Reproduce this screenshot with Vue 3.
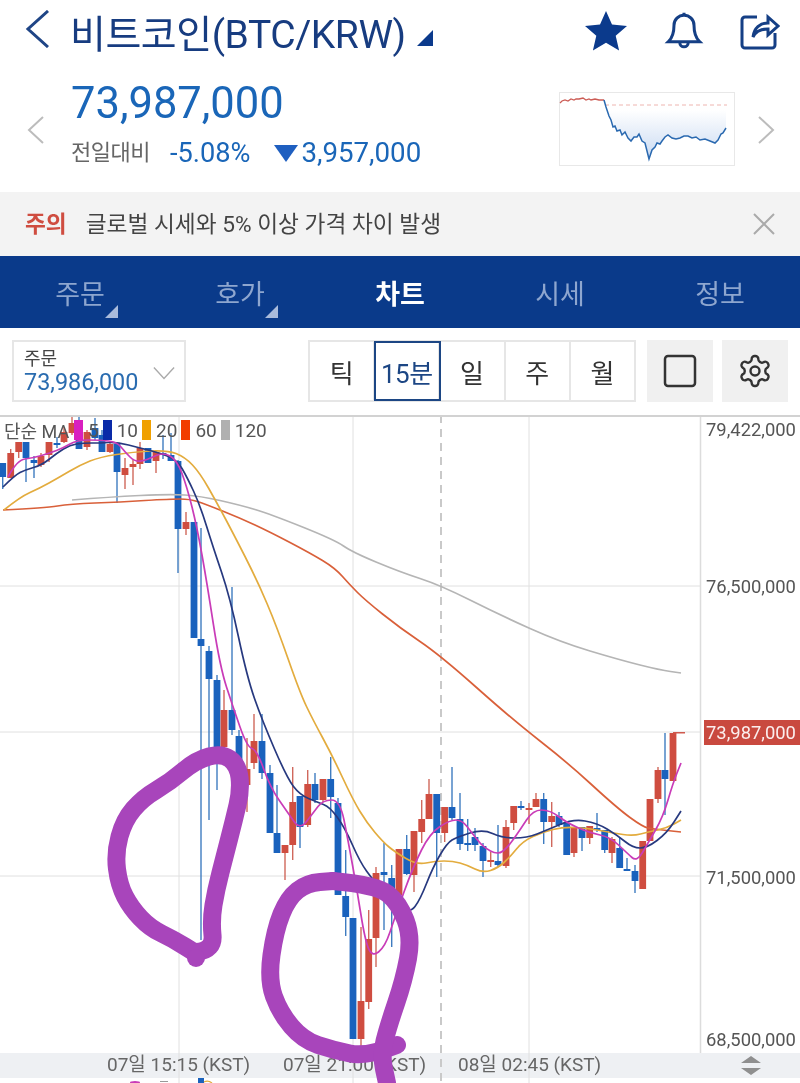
<template>
  <div class="page">
    <header class="title-row">
      <svg class="back" width="24" height="38" viewBox="0 0 24 38"><path d="M23 1 3 19l20 18" /></svg>
      <h1 class="title">비트코인(BTC/KRW)</h1>
      <span class="title-corner"></span>
      <div class="title-icons">
        <svg width="44" height="42" viewBox="0 0 44 42"><path class="star" d="M22 1l6 13.6 15 1.4-11.300 9.800 3.400 14.700L22 32.800 8.900 40.500l3.400-14.700L1 16l15-1.400z" /></svg>
        <svg width="40" height="42" viewBox="0 0 24 25"><g class="line-icon"><path d="M6 9a6 6 0 0 1 12 0c0 7 2.500 9 3.500 10h-19C3.500 18 6 16 6 9" /><path d="M9.500 19.500a2.500 2.500 0 0 0 5 0M12 3V1.500" /></g></svg>
        <svg width="40" height="38" viewBox="0 0 40 38"><g class="line-icon share"><path d="M17 5H5a3 3 0 0 0-3 3v25a3 3 0 0 0 3 3h27a3 3 0 0 0 3-3V21" /><path d="M13 25c1-9 7-14 15-14V5l10 9-10 9v-6c-7 0-12 2-15 8z" /></g></svg>
      </div>
    </header>

    <section class="quote">
      <svg class="pager" width="18" height="28" viewBox="0 0 18 28"><path d="M16 1 2 14l14 13" /></svg>
      <div class="quote-info">
        <div class="price">73,987,000</div>
        <div class="change">
          <span class="change-label">전일대비</span>
          <span class="change-rate">-5.08%</span>
          <span class="down"></span>
          <span class="change-value">3,957,000</span>
        </div>
      </div>
      <svg class="spark" width="176" height="74" viewBox="560 92 176 74">
        <defs>
          <linearGradient id="sparkFill" x1="0" y1="0" x2="0" y2="1">
            <stop offset="0" stop-color="#ffffff" />
            <stop offset="1" stop-color="#c9daf2" />
          </linearGradient>
        </defs>
        <rect x="560.500" y="92.500" width="175" height="73" fill="#fff" stroke="#e8e8e8" />
        <path :d="sparkArea" fill="url(#sparkFill)" />
        <line x1="606" y1="105" x2="728" y2="105" stroke="#eeb5b0" stroke-dasharray="4 3" />
        <polyline :points="sparkUp" fill="none" stroke="#cc5c55" stroke-width="1.300" />
        <polyline :points="sparkDown" fill="none" stroke="#2a69b0" stroke-width="1.500" />
      </svg>
      <svg class="pager" width="18" height="28" viewBox="0 0 18 28"><path d="M2 1l14 13L2 27" /></svg>
    </section>

    <div class="notice">
      <strong>주의</strong>
      <span>글로벌 시세와 5% 이상 가격 차이 발생</span>
      <svg width="24" height="24" viewBox="0 0 24 24"><path d="M2 2l20 20M22 2 2 22" /></svg>
    </div>

    <nav class="tabs">
      <div v-for="tab in tabs" :key="tab.label" class="tab" :class="{ active: tab.active }">
        {{ tab.label }}
        <span v-if="tab.corner" class="tab-corner"></span>
      </div>
    </nav>

    <div class="tools">
      <div class="order-box">
        <div>
          <div class="order-label">주문</div>
          <div class="order-price">73,986,000</div>
        </div>
        <svg width="22" height="14" viewBox="0 0 24 14"><path d="M1 1l11 12L23 1" /></svg>
      </div>
      <div class="periods">
        <div v-for="p in periods" :key="p" class="period" :class="{ selected: p === '15분' }">{{ p }}</div>
      </div>
      <div class="tool-btn first">
        <svg width="34" height="34" viewBox="0 0 34 34"><rect x="2" y="2" width="30" height="30" rx="3" /></svg>
      </div>
      <div class="tool-btn">
        <svg width="36" height="36" viewBox="0 0 24 24">
          <path d="M12.220 2h-.440a2 2 0 0 0-2 2v.180a2 2 0 0 1-1 1.730l-.430.250a2 2 0 0 1-2 0l-.150-.080a2 2 0 0 0-2.730.730l-.220.380a2 2 0 0 0 .730 2.730l.150.100a2 2 0 0 1 1 1.720v.510a2 2 0 0 1-1 1.740l-.150.090a2 2 0 0 0-.730 2.730l.220.380a2 2 0 0 0 2.730.730l.150-.080a2 2 0 0 1 2 0l.430.250a2 2 0 0 1 1 1.730V20a2 2 0 0 0 2 2h.440a2 2 0 0 0 2-2v-.180a2 2 0 0 1 1-1.730l.430-.250a2 2 0 0 1 2 0l.150.080a2 2 0 0 0 2.730-.730l.220-.390a2 2 0 0 0-.730-2.730l-.150-.080a2 2 0 0 1-1-1.740v-.500a2 2 0 0 1 1-1.740l.150-.090a2 2 0 0 0 .730-2.730l-.220-.380a2 2 0 0 0-2.730-.730l-.150.080a2 2 0 0 1-2 0l-.430-.250a2 2 0 0 1-1-1.730V4a2 2 0 0 0-2-2z" />
          <circle cx="12" cy="12" r="3" />
        </svg>
      </div>
    </div>

    <div class="chart">
      <svg class="chart-svg" width="800" height="668" viewBox="0 415 800 668">
        <rect x="0" y="1053" width="800" height="25" fill="#eef0f3" />
        <line v-for="y in [586, 732, 876]" :key="y" x1="0" x2="700" :y1="y" :y2="y" class="grid" />
        <line v-for="x in [179, 353, 529]" :key="x" :x1="x" :x2="x" y1="415" y2="1083" class="grid" />
        <line x1="441" x2="441" y1="415" y2="1083" class="now" />
        <line x1="700.500" x2="700.500" y1="415" y2="1053" class="axis" />

        <g v-for="c in candles" :key="c[0]">
          <rect :x="c[0] - 0.700" :y="c[4]" width="1.400" :height="c[5] - c[4]" :fill="wick(c[1])" />
          <rect :x="c[0] - 3.400" :y="c[2]" width="6.800" :height="Math.max(c[3] - c[2], 2)" :fill="body(c[1])" />
        </g>

        <path :d="smooth(ma120)" class="ma" stroke="#b5b5b5" />
        <path :d="smooth(ma60)" class="ma" stroke="#d9603a" />
        <path :d="smooth(ma20)" class="ma" stroke="#e3ac3e" />
        <path :d="smooth(ma10)" class="ma" stroke="#27397f" />
        <path :d="smooth(ma5)" class="ma" stroke="#c93cb8" />

        <rect x="704" y="720" width="96" height="25" fill="#c9493f" />
        <rect x="673" y="732" width="12" height="1.500" fill="#cf5a4e" />
        <text v-for="l in priceLabels" :key="l.y" x="706" :y="l.y" class="price-label" :fill="l.color">{{ l.text }}</text>
        <text v-for="t in timeLabels" :key="t.x" :x="t.x" y="1071" class="time-label">{{ t.text }}</text>
        <path d="M751 1056l10 7h-20zM741 1068h20l-10 7z" fill="#8f8f8f" />

        <ellipse cx="135" cy="1082.500" rx="5" ry="1.500" fill="#c93cb8" />
        <rect x="160" y="1081" width="8" height="1" fill="#999" />
        <rect x="198" y="1078" width="6" height="5" fill="#1a62bd" />
        <path d="M204 1082q4-2 8 1" fill="none" stroke="#e3ac3e" stroke-width="1.300" />

        <path :d="smooth(loop1)" class="pen" />
        <circle cx="196" cy="958" r="9" fill="#a845bb" />
        <path :d="smooth(loop2a)" class="pen" />
        <path :d="smooth(loop2b)" class="pen" />
      </svg>

      <div class="legend">
        <span class="legend-name">단순 MA</span>
        <template v-for="m in legend" :key="m.label">
          <i :style="{ background: m.color }"></i>
          <span>{{ m.label }}</span>
        </template>
      </div>
    </div>
  </div>
</template>

<script setup>
const tabs = [
  { label: '주문', corner: true },
  { label: '호가', corner: true },
  { label: '차트', active: true },
  { label: '시세' },
  { label: '정보' }
]
const periods = ['틱', '15분', '일', '주', '월']
const legend = [
  { label: '5', color: '#d91fc0' },
  { label: '10', color: '#0a2aa8' },
  { label: '20', color: '#f0a000' },
  { label: '60', color: '#f23c00' },
  { label: '120', color: '#b0b0b0' }
]
const priceLabels = [
  { y: 436, text: '79,422,000', color: '#555' },
  { y: 593, text: '76,500,000', color: '#555' },
  { y: 739, text: '73,987,000', color: '#fbeeee' },
  { y: 884, text: '71,500,000', color: '#555' },
  { y: 1046, text: '68,500,000', color: '#555' }
]
const timeLabels = [
  { x: 107, text: '07일 15:15 (KST)' },
  { x: 283, text: '07일 21:00 (KST)' },
  { x: 458, text: '08일 02:45 (KST)' }
]

const up = [[561, 103], [563, 101], [566, 100], [569, 101], [572, 99], [575, 100], [577, 99], [580, 99], [584, 98], [587, 100], [590, 99], [592, 100], [596, 99], [600, 100], [605, 100]]
const down = [[605, 100], [607, 107], [610, 116], [612, 120], [614, 127], [616, 126], [618, 131], [621, 130], [623, 135], [626, 132], [629, 138], [632, 141], [635, 137], [638, 137], [640, 134], [643, 141], [646, 143], [650, 159], [653, 150], [656, 147], [658, 143], [661, 144], [663, 141], [666, 137], [669, 135], [673, 138], [677, 139], [681, 138], [685, 136], [689, 136], [693, 138], [697, 137], [701, 140], [706, 139], [711, 141], [716, 143], [719, 140], [722, 134], [724, 133], [727, 128]]
const sparkUp = up.join(' ')
const sparkDown = down.join(' ')
const sparkArea = 'M609 110 ' + down.slice(3).map(p => 'L' + p).join(' ') + ' L727 110 Z'

// x, r(ed)/b(lue), body top, body bottom, wick top, wick bottom
const candles = [
  [2.7, 'b', 463, 477, 463, 489], [10.7, 'r', 453, 478, 449, 478], [18.7, 'r', 442, 452, 442, 458],
  [26, 'b', 442, 458, 442, 482], [34, 'b', 460, 463, 456, 478], [41, 'r', 456, 465, 453, 467],
  [49, 'r', 442, 455, 442, 462], [57, 'b', 443, 445, 437, 448], [64, 'r', 432, 442, 427, 443],
  [72, 'r', 423, 433, 415, 435], [79, 'b', 423, 449, 417, 449], [87, 'r', 432, 447, 430, 450],
  [95, 'b', 428, 438, 418, 440], [102, 'b', 435, 452, 430, 452], [110, 'r', 444, 452, 442, 453],
  [117, 'b', 444, 472, 443, 503], [125, 'r', 468, 475, 458, 489], [133, 'r', 464, 467, 460, 485],
  [140, 'r', 448, 464, 442, 469], [148, 'b', 448, 463, 448, 463], [156, 'r', 452, 461, 450, 473],
  [163, 'b', 453, 455, 435, 459], [171, 'b', 455, 461, 433, 461], [178, 'b', 461, 529, 460, 573],
  [186, 'r', 522, 529, 512, 535], [194, 'b', 522, 638, 522, 638], [201, 'b', 639, 646, 528, 940],
  [209, 'b', 651, 679, 646, 820], [217, 'b', 680, 747, 675, 790], [224, 'r', 710, 747, 690, 750],
  [232, 'b', 710, 730, 587, 735], [239, 'b', 736, 760, 730, 765], [247, 'r', 769, 785, 738, 812],
  [254, 'r', 741, 763, 714, 769], [262, 'b', 741, 773, 714, 779], [270, 'b', 773, 833, 765, 833],
  [277, 'b', 833, 853, 785, 853], [285, 'r', 845, 853, 845, 880], [292.7, 'r', 802, 845, 767, 860],
  [300, 'b', 796, 827, 796, 848], [307.7, 'r', 784, 825, 770, 827], [315, 'b', 784, 800, 773, 803],
  [323, 'r', 779, 800, 779, 802], [330.7, 'b', 779, 797, 757, 818], [338, 'b', 803, 895, 798, 895],
  [345.7, 'b', 896, 917, 850, 936], [353, 'b', 918, 1039, 918, 1039], [361, 'r', 1001, 1039, 927, 1048],
  [368.7, 'r', 939, 1002, 910, 1009], [376, 'r', 873, 938, 867, 967], [384, 'b', 872, 875, 843, 930],
  [391.7, 'b', 878, 897, 865, 947], [399, 'r', 849, 895, 849, 895], [406.7, 'b', 849, 874, 835, 875],
  [414, 'r', 831, 875, 831, 892], [421.7, 'r', 819, 832, 800, 843], [429, 'r', 794, 819, 779, 819],
  [436.7, 'b', 794, 833, 794, 877], [444.7, 'r', 807, 833, 807, 842], [452, 'b', 807, 818, 767, 820],
  [460, 'b', 819, 844, 793, 850], [467.7, 'b', 843, 845, 819, 851], [475, 'b', 837, 845, 828, 851],
  [483, 'b', 846, 861, 843, 877], [490.7, 'r', 860, 862, 852, 867], [498, 'b', 861, 865, 825, 867],
  [506, 'r', 827, 866, 820, 868], [513.7, 'r', 806, 823, 806, 830], [521, 'b', 806, 808, 801, 810],
  [529, 'r', 808, 810, 803, 824], [536, 'r', 799, 807, 793, 807], [543.7, 'b', 799, 822, 793, 844],
  [551.7, 'r', 816, 822, 802, 847], [559, 'b', 816, 825, 812, 827], [566.7, 'b', 823, 855, 823, 855],
  [574, 'r', 827, 853, 827, 857], [582, 'b', 827, 838, 827, 851], [589.7, 'r', 826, 838, 826, 844],
  [597, 'b', 828, 830, 813, 832], [604.7, 'b', 830, 850, 830, 853], [612, 'r', 839, 853, 837, 863],
  [619.7, 'b', 848, 868, 837, 868], [627, 'b', 869, 871, 858, 871], [635, 'b', 871, 881, 865, 893],
  [642.7, 'r', 841, 889, 841, 889], [650, 'r', 799, 841, 799, 841], [658, 'r', 770, 799, 767, 803],
  [665, 'b', 770, 779, 733, 815], [673, 'r', 733, 781, 733, 781]
]

const ma120 = [[72, 500], [110, 497], [170, 494], [200, 496], [240, 505], [270, 514], [335, 540], [352, 552], [400, 572], [440, 585], [500, 615], [560, 642], [620, 660], [660, 670], [681, 673]]
const ma60 = [[3, 510], [45, 508], [70, 504], [120, 502], [170, 499], [190, 499], [205, 504], [240, 518], [270, 532], [310, 553], [335, 568], [350, 585], [365, 600], [400, 628], [440, 655], [513, 720], [567, 762], [617, 808], [643, 827], [653, 829], [681, 832]]
const ma20 = [[4, 510], [20, 497], [40, 488], [58, 478], [80, 465], [100, 457], [133, 452], [167, 450], [185, 457], [200, 473], [217, 503], [233, 533], [257, 580], [277, 627], [300, 693], [313, 720], [332, 755], [353, 800], [367, 823], [383, 842], [395, 852], [417, 865], [435, 861], [453, 861], [467, 865], [483, 873], [498, 868], [510, 857], [523, 841], [543, 832], [563, 827], [587, 828], [613, 833], [633, 836], [648, 832], [667, 828], [681, 820]]
const ma10 = [[3, 487], [15, 475], [25, 470], [42, 465], [57, 453], [70, 445], [83, 443], [100, 443], [117, 442], [140, 448], [160, 453], [177, 460], [187, 477], [200, 505], [213, 547], [230, 597], [247, 677], [262, 720], [287, 778], [300, 795], [317, 802], [330, 807], [345, 828], [360, 862], [373, 880], [395, 905], [410, 913], [420, 900], [433, 867], [447, 843], [457, 837], [483, 829], [502, 838], [527, 838], [547, 830], [573, 819], [597, 823], [617, 835], [633, 848], [647, 848], [667, 833], [681, 811]]
const ma5 = [[8, 477], [17, 460], [33, 458], [50, 453], [63, 448], [77, 440], [100, 440], [117, 442], [125, 452], [135, 462], [147, 460], [163, 452], [177, 460], [187, 487], [197, 527], [207, 583], [220, 667], [233, 707], [247, 747], [257, 750], [270, 787], [288, 813], [300, 830], [313, 813], [323, 800], [340, 800], [348, 840], [357, 890], [365, 940], [372, 957], [385, 947], [395, 917], [413, 867], [430, 833], [450, 820], [462, 820], [472, 833], [483, 847], [498, 855], [508, 847], [520, 830], [533, 810], [550, 810], [567, 823], [590, 833], [610, 837], [627, 853], [637, 862], [648, 843], [663, 817], [673, 783], [681, 763]]

// hand-drawn marks on top of the chart
const loop1 = [[197, 952], [214, 950], [211, 920], [216, 890], [225, 855], [234, 820], [241, 790], [238, 765], [222, 753], [196, 760], [170, 782], [143, 798], [124, 820], [115, 853], [119, 885], [131, 908], [150, 928], [173, 939], [197, 954]]
const loop2a = [[397, 1045], [367, 1057], [333, 1050], [303, 1040], [280, 1013], [268, 980], [275, 930], [288, 898], [307, 883], [333, 881]]
const loop2b = [[333, 881], [377, 885], [399, 903], [412, 937], [404, 980], [388, 1027], [381, 1055], [387, 1083]]

function body(type) {
  return type === 'r' ? '#cf4d40' : '#1a62bd'
}

function wick(type) {
  return type === 'r' ? '#d0685c' : '#3f7cc0'
}

function smooth(points) {
  let d = 'M' + points[0]
  for (let i = 1; i < points.length - 1; i++) {
    const mx = (points[i][0] + points[i + 1][0]) / 2
    const my = (points[i][1] + points[i + 1][1]) / 2
    d += ' Q' + points[i] + ' ' + mx + ',' + my
  }
  return d + ' L' + points[points.length - 1]
}
</script>

<style>
html, body {
  background: #fff;
}
</style>

<style scoped>
.page {
  width: 800px;
  height: 1083px;
  overflow: hidden;
  font-family: Roboto, "Noto Sans CJK KR", sans-serif;
  color: #333;
  filter: blur(0.4px);
}

.title-row {
  height: 62px;
  padding: 0 20px 0 25px;
  box-sizing: border-box;
  display: flex;
  align-items: center;
}

.back {
  margin-top: -4px;
}

.back path {
  fill: none;
  stroke: #1f4586;
  stroke-width: 3;
}

.title {
  margin: 0 0 0 21px;
  font-size: 39px;
  font-weight: 400;
  letter-spacing: -0.45px;
  color: #173c80;
  white-space: nowrap;
}

.title-corner {
  width: 0;
  height: 0;
  margin: 14px 0 0 11px;
  border-left: 16px solid transparent;
  border-bottom: 16px solid #0b3a8c;
}

.title-icons {
  margin-left: auto;
  display: flex;
  align-items: center;
  gap: 36px;
}

.star {
  fill: #0b3a8c;
}

.line-icon {
  fill: none;
  stroke: #153f85;
  stroke-width: 1.800;
}

.line-icon.share {
  stroke-width: 3;
}

.quote {
  height: 130px;
  padding: 0 25px 0 27px;
  box-sizing: border-box;
  display: flex;
  align-items: center;
}

.pager {
  margin-top: 6px;
}

.pager path {
  fill: none;
  stroke: #bcbcbc;
  stroke-width: 2;
}

.quote-info {
  margin: -6px 0 0 26px;
}

.price {
  font-size: 43.500px;
  line-height: 50px;
  color: #1a66b8;
}

.change {
  margin-top: 7px;
  display: flex;
  align-items: center;
  color: #1a66b8;
  font-size: 27.700px;
  line-height: 34px;
}

.change-label {
  font-size: 22px;
  color: #666;
  letter-spacing: -0.5px;
}

.change-rate {
  margin-left: 20px;
  font-size: 27.200px;
}

.down {
  width: 0;
  height: 0;
  margin: 2px 3px 0 24px;
  border-left: 12px solid transparent;
  border-right: 12px solid transparent;
  border-top: 17px solid #1f5fc0;
}

.spark {
  margin: 4px 22px 0 auto;
}

.notice {
  height: 64px;
  padding: 0 24px 4px 25px;
  box-sizing: border-box;
  background: #f3f3f3;
  display: flex;
  align-items: center;
  font-size: 22.700px;
  color: #444;
}

.notice strong {
  color: #cf4d40;
  font-weight: 700;
  margin-right: 19px;
}

.notice svg {
  margin: 4px 0 0 auto;
}

.notice path {
  stroke: #aaa;
  stroke-width: 2;
  fill: none;
}

.tabs {
  height: 72px;
  background: #0a3a8a;
  display: flex;
}

.tab {
  flex: 1;
  position: relative;
  display: flex;
  align-items: center;
  justify-content: center;
  font-size: 27px;
  color: #8ea6cf;
}

.tab.active {
  color: #fff;
  font-weight: 700;
}

.tab-corner {
  position: absolute;
  right: 42px;
  bottom: 10px;
  width: 0;
  height: 0;
  border-left: 13px solid transparent;
  border-bottom: 13px solid #a9bbdc;
}

.tools {
  height: 87px;
  padding: 12px 12px 13px;
  box-sizing: border-box;
  display: flex;
}

.order-box {
  width: 174px;
  box-sizing: border-box;
  border: 2px solid #e6e6e6;
  padding: 6px 9px 0 10px;
  display: flex;
  justify-content: space-between;
  align-items: flex-start;
}

.order-box svg {
  margin-top: 18px;
}

.order-box path {
  fill: none;
  stroke: #aaa;
  stroke-width: 1.500;
}

.order-label {
  font-size: 18px;
  line-height: 21px;
  color: #444;
}

.order-price {
  font-size: 23.400px;
  line-height: 27px;
  color: #2a6cb0;
}

.periods {
  margin-left: 122px;
  display: flex;
  border: 2px solid #e6e6e6;
  box-sizing: border-box;
  width: 328px;
}

.period {
  flex: 1;
  display: flex;
  align-items: center;
  justify-content: center;
  border-right: 2px solid #e6e6e6;
  font-size: 26px;
  color: #333;
}

.period:last-child {
  border-right: 0;
}

.period.selected {
  outline: 2px solid #1c4684;
  outline-offset: -1px;
  color: #1c4684;
  letter-spacing: -0.5px;
}

.tool-btn {
  width: 66px;
  margin-left: 9px;
  background: #f0f0f0;
  display: flex;
  align-items: center;
  justify-content: center;
}

.tool-btn.first {
  margin-left: 11px;
}

.tool-btn svg {
  fill: none;
  stroke: #333;
  stroke-width: 2.500;
}

.tool-btn svg path,
.tool-btn svg circle {
  stroke-width: 1.600;
}

.chart {
  position: relative;
  height: 668px;
}

.chart::before {
  content: "";
  position: absolute;
  top: 0;
  left: 0;
  right: 0;
  height: 2px;
  background: #d2d2d2;
  z-index: 1;
}

.chart-svg {
  display: block;
}

.grid {
  stroke: #e0e0e0;
  stroke-width: 1;
}

.now {
  stroke: #c9c9c9;
  stroke-width: 2;
  stroke-dasharray: 8 6;
}

.axis {
  stroke: #dcdcdc;
  stroke-width: 1.500;
}

.ma {
  fill: none;
  stroke-width: 1.700;
}

.pen {
  fill: none;
  stroke: #a845bb;
  stroke-width: 18;
  stroke-linecap: round;
  stroke-linejoin: round;
}

.price-label {
  font-size: 18.400px;
}

.time-label {
  font-size: 19px;
  fill: #666;
}

.legend {
  position: absolute;
  top: 5px;
  left: 4px;
  display: flex;
  align-items: center;
  height: 20px;
  font-size: 19px;
  color: #555;
}

.legend-name {
  margin-right: 7px;
  width: 66px;
  font-size: 18px;
  white-space: nowrap;
}

.legend i {
  width: 9px;
  height: 20px;
  margin-right: 5px;
}

.legend span {
  margin-right: 4px;
}
</style>
